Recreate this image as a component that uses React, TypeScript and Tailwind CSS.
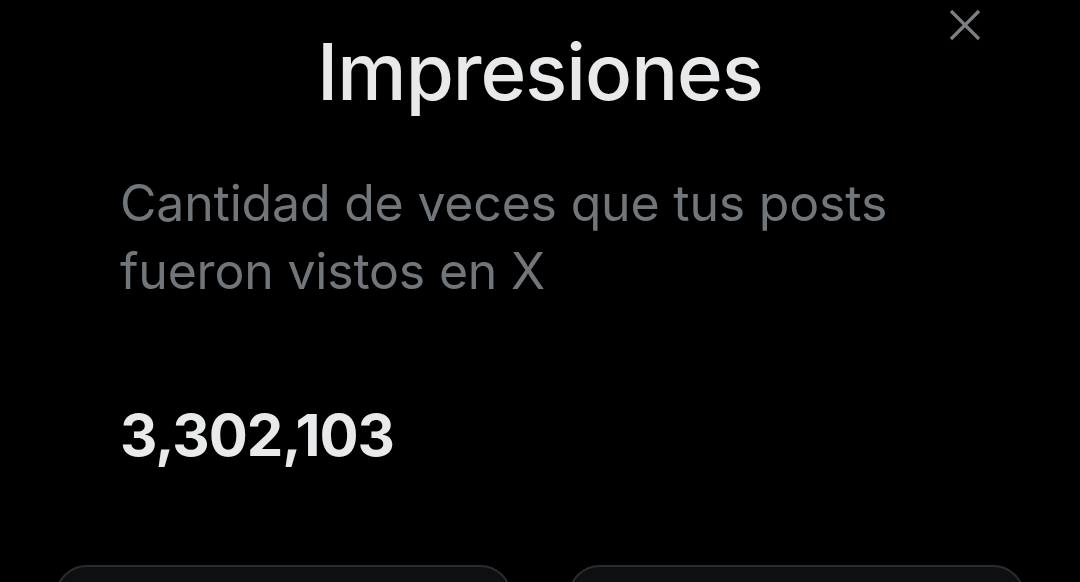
import React from 'react';

function CloseIcon() {
  return (
    <svg width="32" height="32" viewBox="0 0 32 32" fill="none">
      <path d="M2 2L30 30M30 2L2 30" stroke="#7c8085" strokeWidth="3.2" strokeLinecap="butt" />
    </svg>
  );
}

export default function App() {
  return (
    <div
      className="w-[1080px] h-[582px] overflow-hidden bg-black relative"
      style={{ fontFamily: 'Inter, "Noto Sans", sans-serif' }}
    >
      <button className="absolute left-[949px] top-[9px]" aria-label="Cerrar">
        <CloseIcon />
      </button>

      <div className="flex flex-col">
        <h1 className="text-center text-[#e7e9ea] text-[78px] font-medium leading-none tracking-[-1px] pt-[33px] h-[120px]">
          Impresiones
        </h1>

        <div className="pl-[120px] pt-[49px]">
          <p className="text-[#71767b] text-[50px] leading-[68px] tracking-[-0.2px]">
            Cantidad de veces que tus posts
            <br />
            fueron vistos en X
          </p>

          <p className="text-[#e7e9ea] text-[58px] font-bold leading-none pt-[101px] tracking-[-1px]">
            3,302,103
          </p>
        </div>

        <div className="grid grid-cols-2 gap-[56px] px-[55px] pt-[101px]">
          <div className="h-[120px] rounded-[32px] border-2 border-[#2a2c2f] bg-[#0e0f11]" />
          <div className="h-[120px] rounded-[32px] border-2 border-[#2a2c2f] bg-[#0e0f11]" />
        </div>
      </div>
    </div>
  );
}
